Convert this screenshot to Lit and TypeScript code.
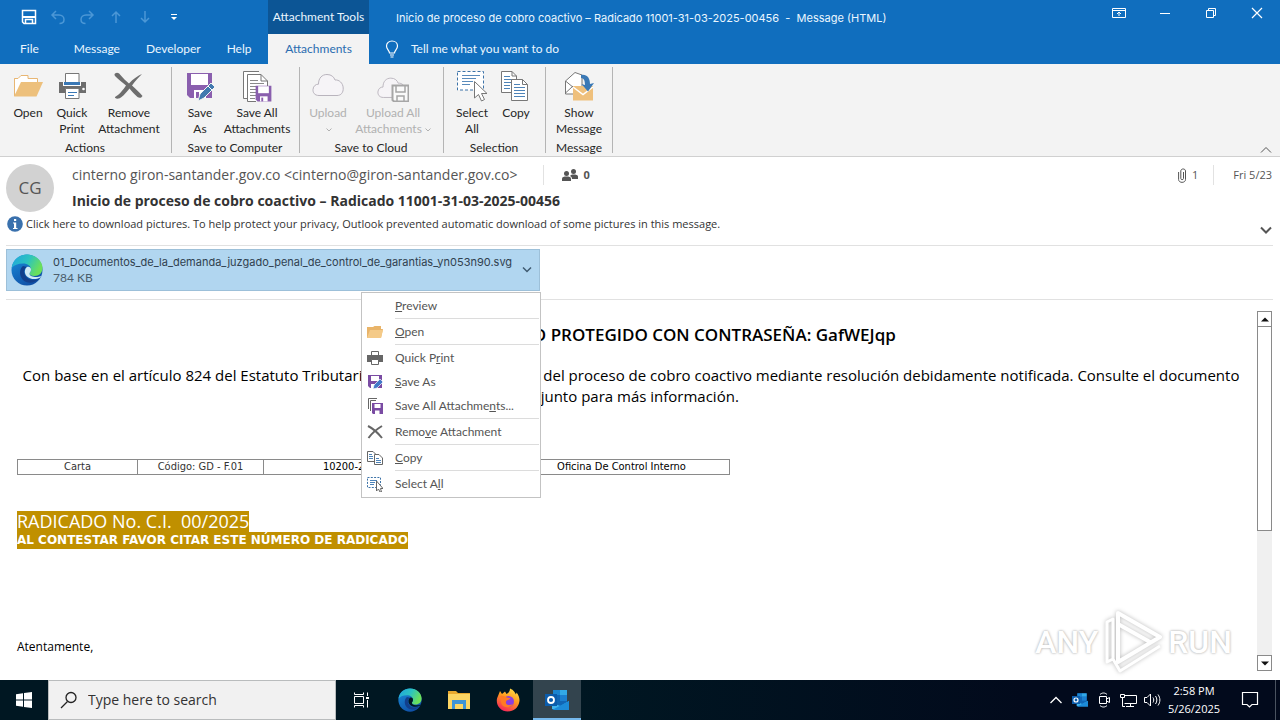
import { LitElement, html, css, svg, TemplateResult } from "lit";
import { customElement } from "lit/decorators.js";
import { classMap } from "lit/directives/class-map.js";

const icon = (w: number, h: number, body: TemplateResult, vb = `0 0 ${w} ${h}`) =>
  html`<svg width=${w} height=${h} viewBox=${vb} aria-hidden="true" fill="none">${body}</svg>`;

const cloud = svg`<path d="M7 25.500C2.500 25.500 .8 22.500 1 19.500 1.200 16 4 14 6.500 14.200 6.500 8 10 4.500 15 4.500 19.500 4.500 22 7 23 10 27 9.500 31 13 31.200 18 31.500 22.500 29 25.500 25 25.500Z" stroke="#b9b4bd" fill="#f6f4f7"/>`;
const floppy = (c: string) => svg`<path d="M1 1H26V26H4L1 23Z" fill=${c}/><path d="M5 2H22V13H5Z" fill="#fff"/><path d="M8 18H20V26H8Z" fill="#fff"/><path d="M10 20H13V26H10Z" fill=${c}/>`;

const bigIcons: Record<string, TemplateResult> = {
  open: svg`<path d="M2.500 24V8.500H6L9 5.500H16V8.500H25.500V12" fill="#fff" stroke="#e8b673"/><path d="M2.500 8.500V26" stroke="#e8b673"/><path d="M2 26.500 9 12H31L24.500 26.500Z" fill="#edc07c"/>`,
  print: svg`<path d="M3 12H30V23H3Z" fill="#6d6d6d"/><path d="M9.500 3.500H23V13H9.500Z" fill="#fff" stroke="#777"/><path d="M7 12H25V16H7Z" fill="#fff"/><path d="M8 12H24V15H8Z" fill="#3a78b5"/><circle cx="27.500" cy="19" r="1.300" fill="#fff"/><path d="M9.500 18.500H23V28.500H9.500Z" fill="#fff" stroke="#777"/><path d="M12 22.500H21M12 25.500H18" stroke="#3a78b5"/>`,
  remove: svg`<path d="M2 3.500C4 2 6 3 7 4.500 10 8 13 11 16 13.500 20 9 25 5.500 29 4 26 7 22 11 19 15.500 23 19 27 23 29.500 26 28 28.500 26 28 24.500 27 21 24 19 21.500 16.500 18.500 12 24 9 27.500 6 28.500 3 29 1.500 28 2 27 6 25 10 20 13 15.500 9 12 5 9 2.500 6.500 1.500 5.500 1 4.500 2 3.500Z" fill="#6d6d6d"/>`,
  saveAs: svg`<g transform="translate(2 2)">${floppy("#8a5fae")}</g><path d="M14 31 16 24 27 13 31 17 20 28Z" fill="#4179ae" stroke="#f3f3f3"/><path d="m24 16 4 4" stroke="#fff"/>`,
  saveAll: svg`<path d="M16 28.500H2.500V1.500H18" stroke="#777" fill="#fff"/><path d="M15 31.500H6.500V4.500H20L26.500 11V16" stroke="#777" fill="#fff"/><path d="M20 4.500V11H26.500" stroke="#777"/><path d="M9 10.500H17M9 13.500H23M9 16.500H23M9 19.500H16M9 22.500H15M9 25.500H15M9 28.500H14" stroke="#8a8a8a"/><g transform="translate(14 15) scale(.63)">${floppy("#8a5fae")}</g>`,
  upload: svg`${cloud}`,
  uploadAll: svg`<g transform="translate(0 4) scale(.92)">${cloud}</g><path d="M15.500 15.500H31.500V31.500H17L15.500 30Z" fill="#fafafa" stroke="#a6a6a6" stroke-width="2"/><path d="M19 15V22H28V15M20 31V26H27V31" stroke="#a6a6a6" stroke-width="1.500"/>`,
  selectAll: svg`<path d="M1.500 1.500H27.500V20H1.500Z" fill="#fff" stroke="#3d73a8" stroke-width="1" stroke-dasharray="3 2"/><path d="M6 5.500H24M6 8.500H20M6 11.500H17M6 14.500H14" stroke="#5a8bbb"/><path d="M18.500 11.500V28L22.500 24.500 25.500 31 28.500 29.500 25.500 23.500H31Z" fill="#fff" stroke="#777"/>`,
  copy: svg`<path d="M1.500 1.500H12L16.500 6V22.500H1.500Z" fill="#fff" stroke="#777"/><path d="M12 1.500V6H16.500" stroke="#777"/><path d="M4 6.500H10M4 9.500H14M4 12.500H14M4 15.500H10M4 18.500H10" stroke="#4d83b8"/><path d="M11.500 9.500H22.500L27.500 14.500V30.500H11.500Z" fill="#fff" stroke="#777"/><path d="M22.500 9.500V14.500H27.500" stroke="#777"/><path d="M14 14.500H20M14 17.500H25M14 20.500H25M14 23.500H25M14 26.500H25" stroke="#4d83b8"/>`,
  show: svg`<path d="M2.500 24V11L12 2.500 19 5V24Z" fill="#fff" stroke="#777"/><path d="M2.500 11 11 18M2.500 23 10 16" stroke="#777"/><path d="M10 16H30V30.500H10Z" fill="#efc07c"/><path d="M10 17 20 24.500 30 17" stroke="#fff" stroke-width="1.500"/><path d="M18 5C24 4 27 8 27 14L31 13 25 21.500 18.500 14 22 15C22 11 21 8 18 8Z" fill="#3a78b5"/>`,
};

const smallIcons: Record<string, TemplateResult> = {
  open: svg`<path d="M1 3H6L7.500 2H14V5H16L14 14H0V3Z" fill="#e9b469"/><path d="M0 14 3 6H16L14 14Z" fill="#f4ca88"/>`,
  print: svg`<path d="M4.500 1.500H11.500V6H4.500Z" fill="#fff" stroke="#666"/><path d="M0 5H16V12H0Z" fill="#666"/><path d="M4.500 9.500H11.500V14.500H4.500Z" fill="#fff" stroke="#666"/>`,
  saveAs: svg`<path d="M1 1H15V14H3L1 12Z" fill="#7a4ba3"/><path d="M4 2H12V7H4ZM4 10H9V14H4Z" fill="#fff"/><path d="M6 15 7 11 13 5 16 8 10 14Z" fill="#4179c8" stroke="#fff" stroke-width=".7"/>`,
  saveAll: svg`<path d="M1.500 11V.500H10M3.500 13V2.500H9" stroke="#666"/><path d="M5 5H16V16H6L5 15Z" fill="#7a4ba3"/><path d="M7.500 6H13.500V10H7.500ZM8 12.500H12.500V16H8Z" fill="#fff"/>`,
  remove: svg`<path d="M1 2C5 4 11 9 15 14M15 2C10 5 5 9 1.500 14" stroke="#666" stroke-width="2"/>`,
  copy: svg`<path d="M.500 1.500H6L8.500 4V11.500H.500Z" fill="#fff" stroke="#666"/><path d="M2 4.500H5M2 6.500H6M2 8.500H6" stroke="#4d83b8"/><path d="M7.500 4.500H12L15.500 8V14.500H7.500Z" fill="#fff" stroke="#666"/><path d="M9 8.500H12M9 10.500H14M9 12.500H14" stroke="#4d83b8"/>`,
  selectAll: svg`<path d="M.500 1.500H13.500V11.500H.500Z" stroke="#3d73a8" stroke-dasharray="2 1.300"/><path d="M3 4.500H10M3 6.500H8M3 8.500H7" stroke="#4d83b8"/><path d="M9.500 5V15L11.500 13 13 16H14.500L13.500 12.500H16Z" fill="#fff" stroke="#666"/>`,
};

const edge = svg`<defs>
  <linearGradient id="eg" x1="0" y1="0" x2="1" y2=".4"><stop offset="0" stop-color="#1fa3e0"/><stop offset=".55" stop-color="#2cc3c0"/><stop offset="1" stop-color="#6be05a"/></linearGradient>
  <linearGradient id="eb" x1="0" y1="0" x2=".6" y2="1"><stop offset="0" stop-color="#1a8fdc"/><stop offset="1" stop-color="#0f4fa6"/></linearGradient></defs>
  <circle cx="16" cy="16" r="15.500" fill="url(#eb)"/>
  <path d="M.7 14C2 5 8.500 .5 16 .5 25 .5 31.500 7 31.500 14 31.500 19 28 22 23.500 22 20 22 18.500 20.500 18.500 19.500 18.500 18.500 20 18 20 15.500 20 12 16.500 9.500 12 9.500 7 9.500 3 11 .7 14Z" fill="url(#eg)"/>
  <path d="M12 12C8 15 8 22 12 26 16 30 24 29.500 28.500 24.500 24 27 17.500 26.500 15 22.500 12.500 19 12.500 15 16 13Z" fill="#123f8c"/>
  <path d="M16 13C13.500 15 13 19 15.500 22 18.500 25.500 25 26 28.800 23.700 30 23 30.500 22 29.500 22.300 27 23.500 18.500 23.500 18.500 19.500 18.500 18.500 20 18 20 15.500 20 13.500 18 12 16 13Z" class="gap"/>`;

const outlook = svg`<path d="M8 1H22V17H8Z" fill="#1066b5"/><path d="M15 1H22V6H15Z" fill="#32a9e7"/><path d="M8 1H15V6H8Z" fill="#1a84d0"/><path d="M15 6H22V12H15Z" fill="#1b7fd0"/><path d="M7 20V14L15.500 17 24 12V20Z" fill="#3fb4ee"/><path d="M7 21 24 12V21Z" fill="#1c8bd8"/><path d="M0 5H12V17H0Z" fill="#0b5cab"/><circle cx="6" cy="11" r="3" stroke="#fff" stroke-width="1.800"/>`;

const firefox = svg`<defs><linearGradient id="ff" x1=".8" y1="0" x2=".3" y2="1"><stop offset="0" stop-color="#ffe14a"/><stop offset=".45" stop-color="#ff9a1e"/><stop offset="1" stop-color="#f7235b"/></linearGradient></defs>
  <path d="M2 8 4 3 6 6 9 3.500 10.500 6C13 5 14 2.500 14 .5 18 2 19 5 20 6.500L20.500 4.500C23 7.500 24 11 23.300 14 22 20 17.500 23.500 12 23.500 5.500 23.500 .8 18.500 .8 13 .8 11 1.200 9.500 2 8Z" fill="url(#ff)"/>
  <circle cx="12.500" cy="13.500" r="5.500" fill="#8a3fe0"/><path d="M4 8C7 7 9 8.500 11 9.500 13 10 15 9.500 14 11 12 12.500 10 12 10 14 9 17 14 18 17 16 15 20 8 20.500 5.500 16 4.500 13 5 10 4 8Z" fill="#ff7a24"/>`;

const folder = svg`<path d="M0 2H8L10 4H22V20H0Z" fill="#e8a92f"/><path d="M0 5H22V20H0Z" fill="#fbd563"/><path d="M4 11H18V20H4Z" fill="#3d94d6"/><path d="M7 15H15V20H7Z" fill="#fbd563"/>`;

interface Cmd { icon: string; lines: string[]; off?: boolean; drop?: boolean }
const groups: { name: string; cmds: Cmd[] }[] = [
  { name: "Actions", cmds: [{ icon: "open", lines: ["Open"] }, { icon: "print", lines: ["Quick", "Print"] }, { icon: "remove", lines: ["Remove", "Attachment"] }] },
  { name: "Save to Computer", cmds: [{ icon: "saveAs", lines: ["Save", "As"] }, { icon: "saveAll", lines: ["Save All", "Attachments"] }] },
  { name: "Save to Cloud", cmds: [{ icon: "upload", lines: ["Upload", ""], off: true, drop: true }, { icon: "uploadAll", lines: ["Upload All", "Attachments"], off: true, drop: true }] },
  { name: "Selection", cmds: [{ icon: "selectAll", lines: ["Select", "All"] }, { icon: "copy", lines: ["Copy"] }] },
  { name: "Message", cmds: [{ icon: "show", lines: ["Show", "Message"] }] },
];

@customElement("outlook-ribbon")
export class OutlookRibbon extends LitElement {
  static styles = css`
    :host { display: flex; height: 92px; background: #f3f3f3; border-bottom: 1px solid #d0d0d0; font: 12px/16px Lato, sans-serif; color: #262626; }
    .group { display: flex; flex-direction: column; justify-content: space-between; padding: 6px 7px 0 6px; border-style: solid; border-image: linear-gradient(transparent 4px, #b4b4b4 4px 88px, transparent 88px) 1; border-width: 0 1px 0 0; }
    .group:last-of-type { padding: 6px 0 0; }
    .cmds { display: flex; align-items: flex-start; }
    button { min-width: 44px; border: 0; padding: 0; background: none; font: inherit; color: inherit; display: flex; flex-direction: column; align-items: center; gap: 3px; }
    .group:last-of-type button { min-width: 66px; }
    .wide { min-width: 70px; }
    .wide.drop { min-width: 86px; }
    .off { color: #b1b1b1; }
    .off svg.chev { margin-left: 3px; }
    .label { display: block; white-space: nowrap; }
    .name { text-align: center; white-space: nowrap; }
    .fill { flex: 1; display: flex; justify-content: flex-end; align-items: flex-end; padding: 2px 8px; }
    .fill button { min-width: 12px; }
  `;
  render() {
    return html`${groups.map(g => html`<section class="group">
        <div class="cmds">${g.cmds.map(c => html`<button ?disabled=${c.off} class=${classMap({ off: !!c.off, drop: !!c.drop, wide: (c.lines[1] ?? "").length > 8 })}>
          ${icon(32, 32, bigIcons[c.icon])}
          <span class="label">${c.lines[0]}${c.lines.length > 1 ? html`<br>${c.lines[1]}` : ""}${c.drop ? html`<svg class="chev" width="6" height="6" viewBox="0 0 6 6" fill="none"><path d="M.5 1.500 3 4 5.500 1.500" stroke="#b1b1b1"/></svg>` : ""}</span>
        </button>`)}</div>
        <div class="name">${g.name}</div></section>`)}
      <div class="fill"><button aria-label="Collapse the ribbon">${icon(12, 8, svg`<path d="M1 6.500 6 1.500 11 6.500" stroke="#555"/>`)}</button></div>`;
  }
}

const menu: [string, string, string, string, boolean][] = [
  ["", "", "P", "review", true],
  ["open", "", "O", "pen", true],
  ["print", "Quick P", "r", "int", false],
  ["saveAs", "", "S", "ave As", false],
  ["saveAll", "Save All Attachme", "n", "ts...", true],
  ["remove", "Remo", "v", "e Attachment", true],
  ["copy", "", "C", "opy", true],
  ["selectAll", "Select A", "l", "l", false],
];

@customElement("attachment-menu")
export class AttachmentMenu extends LitElement {
  static styles = css`
    :host { display: block; box-sizing: border-box; background: #fff; border: 1px solid #c3c3c3; padding: 1px 0; font: 12px/24px Lato, sans-serif; color: #555; }
    button { display: flex; width: 100%; height: 24px; border: 0; padding: 0 5px; background: none; font: inherit; color: inherit; align-items: center; gap: 12px; text-align: left; white-space: nowrap; }
    .rule { height: 1px; margin: 0 1px 1px 33px; background: #dcdcdc; }
  `;
  render() {
    return menu.map(([i, a, u, b, rule]) => html`<button role="menuitem">${icon(16, 16, i ? smallIcons[i] : svg``)}<span>${a}<u>${u}</u>${b}</span></button>${rule ? html`<div class="rule"></div>` : ""}`);
  }
}

@customElement("win-taskbar")
export class WinTaskbar extends LitElement {
  static styles = css`
    :host { display: flex; height: 40px; background: linear-gradient(90deg, #001722 45%, #020a1c 80%); color: #fff; font: 11px/18px "Open Sans", sans-serif; }
    button { border: 0; padding: 0; background: none; color: inherit; font: inherit; display: grid; place-items: center; width: 48px; }
    .search { display: flex; align-items: center; gap: 10px; width: 288px; box-sizing: border-box; background: #f1f1f1; border: 1px solid #b9bcbd; padding: 0 11px; }
    .search input { border: 0; background: none; outline: 0; padding: 0; flex: 1; min-width: 0; font: 14px/20px "Open Sans", sans-serif; color: #333; }
    .search input::placeholder { color: #333; opacity: 1; }
    .apps { display: flex; flex: 1; gap: 1px; padding-left: 1px; }
    .apps .gap { fill: #001722; }
    .active { background: #33444e; box-shadow: inset 0 -2px #76b9ed; }
    .tray { display: flex; align-items: center; }
    .tray button { width: 24px; }
    .tray .clock { width: 60px; text-align: center; }
    .tray .note { width: 52px; height: 40px; border-right: 1px solid #4a5360; margin-right: 4px; }
  `;
  render() {
    return html`
      <button aria-label="Start">${icon(16, 16, svg`<path d="M0 2.200 7 1.200V7.500H0ZM8 1 16 0V7.500H8ZM0 8.500H7V14.800L0 13.800ZM8 8.500H16V16L8 15Z" fill="#fff"/>`)}</button>
      <label class="search">${icon(18, 18, svg`<circle cx="11" cy="6.500" r="5" stroke="#222" stroke-width="1.300"/><path d="M7.500 10.500 1 17" stroke="#222" stroke-width="1.300"/>`)}<input type="text" aria-label="Search" placeholder="Type here to search"></label>
      <div class="apps">
        <button aria-label="Task view">${icon(16, 16, svg`<path d="M1.500 .500V2.500H10.500V.500M1.500 15.500V13.500H10.500V15.500M1.500 4.500H10.500V11.500H1.500ZM14.500 .500V4M14.500 8V15.500" stroke="#fff"/><path d="M13 5H16V7H13Z" fill="#fff"/>`)}</button>
        <button aria-label="Microsoft Edge">${icon(24, 24, edge, "0 0 32 32")}</button>
        <button aria-label="File Explorer">${icon(22, 22, folder)}</button>
        <button aria-label="Firefox">${icon(24, 24, firefox)}</button>
        <button class="active" aria-label="Outlook">${icon(24, 22, outlook)}</button>
      </div>
      <div class="tray">
        <button aria-label="Show hidden icons">${icon(14, 10, svg`<path d="M1.500 8 7 2.500 12.500 8" stroke="#fff" stroke-width="1.300"/>`)}</button>
        <button aria-label="Outlook">${icon(16, 16, outlook, "0 0 24 22")}</button>
        <button aria-label="Meet Now">${icon(14, 16, svg`<path d="M2.500 4.500H9.500V11.500H2.500ZM9.500 7 12.500 5.500V10.500L9.500 9M3 2.500C5 .500 8 .500 10 2.500M3 13.500C5 15.500 8 15.500 10 13.500" stroke="#fff"/>`)}</button>
        <button aria-label="Network">${icon(17, 16, svg`<path d="M4.500 3.500H16.500V11.500H4.500M10.500 11.500V14.500M6 14.500H14M.500 2.500H4.500V5.500H.500ZM2.500 5.500V14.500H5" stroke="#fff"/>`)}</button>
        <button aria-label="Volume">${icon(17, 16, svg`<path d="M.500 5.500H3L6.500 2V14L3 10.500H.500ZM9 5.500C10 7 10 9 9 10.500M11.500 4C13.300 6.500 13.300 9.500 11.500 12M14 2.500C16.500 6 16.500 10 14 13.500" stroke="#fff"/>`)}</button>
        <button class="clock">2:58 PM<br>5/26/2025</button>
        <button class="note" aria-label="Notifications">${icon(18, 18, svg`<path d="M1.500 1.500H16.500V13.500H11L8.500 16 6 13.500H1.500Z" stroke="#fff" stroke-width="1.200"/>`)}</button>
      </div>`;
  }
}

@customElement("app-root")
export class AppRoot extends LitElement {
  static styles = css`
    :host { display: flex; flex-direction: column; height: 100vh; overflow: hidden; background: #fff; font: 12px/16px Lato, sans-serif; color: #333; }
    button { border: 0; padding: 0; margin: 0; background: none; color: inherit; font: inherit; }
    .top { display: grid; grid-template-columns: 268px 101px 1fr; grid-template-rows: 34px 30px; background: #106ebe; color: #eaf6ff; }
    .quick { display: flex; align-items: center; gap: 13px; padding-left: 21px; }
    .quick button { width: 16px; height: 16px; }
    .tools { background: #0c5595; display: grid; place-items: center; white-space: nowrap; }
    .title { display: flex; align-items: center; padding-left: 27px; font: 11px/16px Inter, sans-serif; }
    .caption { white-space: pre; padding-top: 2px; }
    .win { display: flex; margin-left: auto; gap: 30px; padding-right: 15px; height: 20px; }
    .win button { width: 16px; height: 16px; }
    .tabs { display: flex; align-items: center; gap: 26px; padding-left: 20px; }
    .tabs button:first-child { padding-right: 9px; }
    .current { background: #f3f3f3; color: #2a6cb0; text-align: center; }
    .tell { display: flex; align-items: center; gap: 12px; padding-left: 16px; }
    .head { display: grid; grid-template-columns: 48px 1fr auto; column-gap: 18px; padding: 7px 8px 0 6px; }
    .avatar { width: 48px; height: 48px; border-radius: 50%; background: #d2d2d2; color: #555; display: grid; place-items: center; font: 17px/24px "Open Sans", sans-serif; }
    .from { display: flex; align-items: center; height: 22px; font: 14px/22px "Open Sans", sans-serif; color: #555; white-space: nowrap; }
    .people { display: flex; align-items: center; gap: 5px; margin-left: 26px; padding-left: 18px; border-left: 1px solid #e2e2e2; height: 20px; font: bold 11px/16px "Open Sans", sans-serif; }
    .subject { margin: 0; font: bold 14px/30px "Open Sans", sans-serif; color: #333; }
    .meta { display: flex; align-items: center; height: 22px; color: #555; font: 11px/16px "Open Sans", sans-serif; }
    .meta .count { padding: 0 15px 0 6px; }
    .meta .date { padding-left: 19px; border-left: 1px solid #e2e2e2; line-height: 20px; }
    .info { display: flex; align-items: center; height: 16px; margin: 0 8px 0 7px; padding-bottom: 13px; font: 11px/16px "Open Sans", sans-serif; }
    .info button { display: flex; align-items: center; gap: 3px; white-space: nowrap; }
    .info .more { margin-left: auto; padding-top: 12px; }
    .files { margin: 0 7px 0 6px; padding: 3px 0 8px; border: solid #e1e1e1; border-width: 1px 0; display: flex; }
    .file { position: relative; display: flex; width: 534px; height: 42px; box-sizing: border-box; background: #b1d6f0; border: 1px solid #9dc0d9; align-items: center; }
    .pick { display: flex; flex: 1; align-items: center; gap: 10px; padding-left: 4px; text-align: left; font: 11px/16px Inter, sans-serif; color: #30414f; white-space: nowrap; }
    .pick .gap { fill: #cfe9f6; }
    .size { font: 12px/16px Lato, sans-serif; color: #4c5f6d; }
    .arrow { width: 24px; height: 40px; }
    attachment-menu { position: absolute; z-index: 2; top: 42px; right: -2px; width: 180px; }
    .reading { flex: 1; min-height: 0; display: flex; position: relative; }
    .letter { flex: 1; min-width: 0; padding: 24px 12px 0 17px; color: #000; font: 15px/21px "Open Sans", sans-serif; }
    .letter p { margin: 0; }
    .lead { text-align: center; }
    .letter .key { font-weight: 600; font-size: 17px; margin-bottom: 20px; }
    table { border-collapse: collapse; margin: 52px 0 36px; width: 713px; table-layout: fixed; font: 11px/14px "DejaVu Sans Condensed", "DejaVu Sans", sans-serif; }
    td { border: 1px solid #8a8a8a; padding: 0; text-align: center; color: #333; }
    td.dark { color: #000; }
    .c1 { width: 120px; } .c2 { width: 126px; } .c3 { width: 250px; }
    mark { display: table; background: #c09000; color: #fff; white-space: pre; }
    .no { font: 18px/21px "Open Sans", sans-serif; }
    .cite { font: bold 12px/17px "DejaVu Sans", sans-serif; }
    .letter .bye { margin-top: 87px; font: 12px/21px "Open Sans", sans-serif; }
    .scroll { display: flex; flex-direction: column; width: 15px; margin: 11px 8px 9px 0; background: #f0f0f0; }
    .scroll button { height: 16px; box-sizing: border-box; border: 1px solid #8a8a8a; background: #fff; display: grid; place-items: center; }
    .thumb { height: 57%; margin-top: -1px; box-sizing: border-box; border: 1px solid #8a8a8a; background: #fff; }
    .space { flex: 1; }
    .brand { position: absolute; right: 48px; bottom: 6px; display: flex; align-items: center; gap: 6px; color: #fff; font: 500 32px/40px Roboto, sans-serif; text-shadow: 0 0 3px #bbb, 0 0 2px #c5c5c5; }
    .brand svg { filter: drop-shadow(0 0 2px #b8b8b8); }
  `;
  render() {
    const dim = "#4b97d6";
    return html`
      <header class="top">
        <div class="quick">
          <button aria-label="Save">${icon(16, 16, svg`<path d="M1.500 1.500H14.500V14.500H3L1.500 13Z" stroke="#fff" stroke-width="1.500"/><path d="M2 7H14V9H2Z" fill="#fff"/><path d="M4.500 14V10.500H11.500V14" stroke="#fff" stroke-width="1.500"/>`)}</button>
          <button aria-label="Undo">${icon(16, 16, svg`<path d="M6 2 2 6 6 10M2 6H9C12 6 14 8 14 10.500 14 13 12 14.500 9.500 14.500" stroke=${dim} stroke-width="1.500"/>`)}</button>
          <button aria-label="Redo">${icon(16, 16, svg`<path d="M10 2 14 6 10 10M14 6H7C4 6 2 8 2 10.500 2 13 4 14.500 6.500 14.500" stroke=${dim} stroke-width="1.500"/>`)}</button>
          <button aria-label="Previous">${icon(16, 16, svg`<path d="M8 14V3M4 7 8 3 12 7" stroke=${dim} stroke-width="1.500"/>`)}</button>
          <button aria-label="Next">${icon(16, 16, svg`<path d="M8 2V13M4 9 8 13 12 9" stroke=${dim} stroke-width="1.500"/>`)}</button>
          <button aria-label="Customize">${icon(16, 16, svg`<path d="M5 5.500H11" stroke="#fff"/><path d="M5 8H11L8 11Z" fill="#fff"/>`)}</button>
        </div>
        <div class="tools">Attachment Tools</div>
        <div class="title">
          <span class="caption">${"Inicio de proceso de cobro coactivo – Radicado 11001-31-03-2025-00456  -  Message (HTML)"}</span>
          <div class="win">
            <button aria-label="Ribbon display options">${icon(14, 12, svg`<path d="M.500 1.500H13.500V10.500H.500ZM.500 3.500H13.500M7 9V5M5 7 7 5 9 7" stroke="#fff"/>`)}</button>
            <button aria-label="Minimize">${icon(12, 12, svg`<path d="M1 6.500H11" stroke="#fff"/>`)}</button>
            <button aria-label="Restore">${icon(12, 12, svg`<path d="M1.500 3.500H8.500V10.500H1.500ZM3.500 3V1.500H10.500V8.500H9" stroke="#fff"/>`)}</button>
            <button aria-label="Close">${icon(12, 12, svg`<path d="M1 1 11 11M11 1 1 11" stroke="#fff" stroke-width="1.200"/>`)}</button>
          </div>
        </div>
        <nav class="tabs"><button>File</button><button>Message</button><button>Developer</button><button>Help</button></nav>
        <button class="current">Attachments</button>
        <button class="tell">${icon(14, 18, svg`<path d="M4.500 13C4.500 10.500 1.500 9.500 1.500 6 1.500 3 4 1 7 1 10 1 12.500 3 12.500 6 12.500 9.500 9.500 10.500 9.500 13ZM5 15H9M5.500 17H8.500" stroke="#fff" stroke-width="1.200"/>`)}Tell me what you want to do</button>
      </header>
      <outlook-ribbon></outlook-ribbon>
      <section class="head">
        <div class="avatar">CG</div>
        <div>
          <div class="from">cinterno giron-santander.gov.co &lt;cinterno@giron-santander.gov.co&gt;
            <span class="people">${icon(16, 12, svg`<g fill="#555"><circle cx="4.500" cy="4.500" r="2.500"/><path d="M0 12V9.500C0 8 2 7.500 4.500 7.500S9 8 9 9.500V12Z"/><circle cx="11.500" cy="2.500" r="2.500"/><path d="M8 7C9 5.500 10 5.500 11.500 5.500 14 5.500 16 6 16 7.500V10H10C10 8 9 7.500 8 7Z"/></g>`)}0</span></div>
          <h1 class="subject">Inicio de proceso de cobro coactivo – Radicado 11001-31-03-2025-00456</h1>
        </div>
        <div class="meta">${icon(8, 15, svg`<path d="M5.500 4V10.500C5.500 12 2.800 12 2.800 10.500V3C2.800 .3 7.500 .3 7.500 3V11.500C7.500 15.300 .6 15.300 .6 11.500V4" stroke="#555"/>`)}<span class="count">1</span><span class="date">Fri 5/23</span></div>
      </section>
      <div class="info">
        <button>${icon(16, 16, svg`<circle cx="8" cy="8" r="7.800" fill="#3a71ad"/><path d="M7 3H9.200V5H7ZM6 6.500H9.200V12H10.500V13H6V12H7V7.500H6Z" fill="#fff"/>`)}<span>Click here to download pictures. To help protect your privacy, Outlook prevented automatic download of some pictures in this message.</span></button>
        <button class="more" aria-label="Expand header">${icon(12, 8, svg`<path d="M1 1.500 6 6.500 11 1.500" stroke="#555" stroke-width="2"/>`)}</button>
      </div>
      <section class="files">
        <div class="file">
          <button class="pick">${icon(32, 32, edge)}<span>01_Documentos_de_la_demanda_juzgado_penal_de_control_de_garantias_yn053n90.svg<br><span class="size">784 KB</span></span></button>
          <button class="arrow" aria-label="Attachment options">${icon(10, 8, svg`<path d="M1 1.500 5 5.500 9 1.500" stroke="#3f5a70" stroke-width="1.500"/>`)}</button>
          <attachment-menu role="menu"></attachment-menu>
        </div>
      </section>
      <main class="reading">
        <article class="letter">
          <p class="lead key">EL ARCHIVO ADJUNTO PROTEGIDO CON CONTRASEÑA: GafWEJqp</p>
          <p class="lead">Con base en el artículo 824 del Estatuto Tributario, se le comunica el inicio del proceso de cobro coactivo mediante resolución debidamente notificada. Consulte el documento adjunto para más información.</p>
          <table><colgroup><col class="c1"><col class="c2"><col class="c3"><col></colgroup>
            <tr><td>Carta</td><td>Código: GD - F.01</td><td class="dark">10200-28-00456-2025-C.I.</td><td class="dark">Oficina De Control Interno</td></tr></table>
          <mark class="no">RADICADO No. C.I.  00/2025</mark>
          <mark class="cite">AL CONTESTAR FAVOR CITAR ESTE NÚMERO DE RADICADO</mark>
          <p class="bye">Atentamente,</p>
        </article>
        <div class="scroll">
          <button aria-label="Scroll up">${icon(8, 5, svg`<path d="M0 4.500 4 .500 8 4.500Z" fill="#111"/>`)}</button>
          <div class="thumb"></div><div class="space"></div>
          <button aria-label="Scroll down">${icon(8, 5, svg`<path d="M0 .500 4 4.500 8 .500Z" fill="#111"/>`)}</button>
        </div>
        <div class="brand"><span>ANY</span>${icon(58, 64, svg`<path d="M14 3 56 27 14 52ZM14 3V52M14 14 46 32" stroke="#fff" stroke-width="4" stroke-linejoin="round"/><path d="M9 9 3 12V52L9 49ZM9 49 16 61 56 36" stroke="#fff" stroke-width="3" stroke-linejoin="round"/>`)}<span>RUN</span></div>
      </main>
      <win-taskbar></win-taskbar>`;
  }
}
